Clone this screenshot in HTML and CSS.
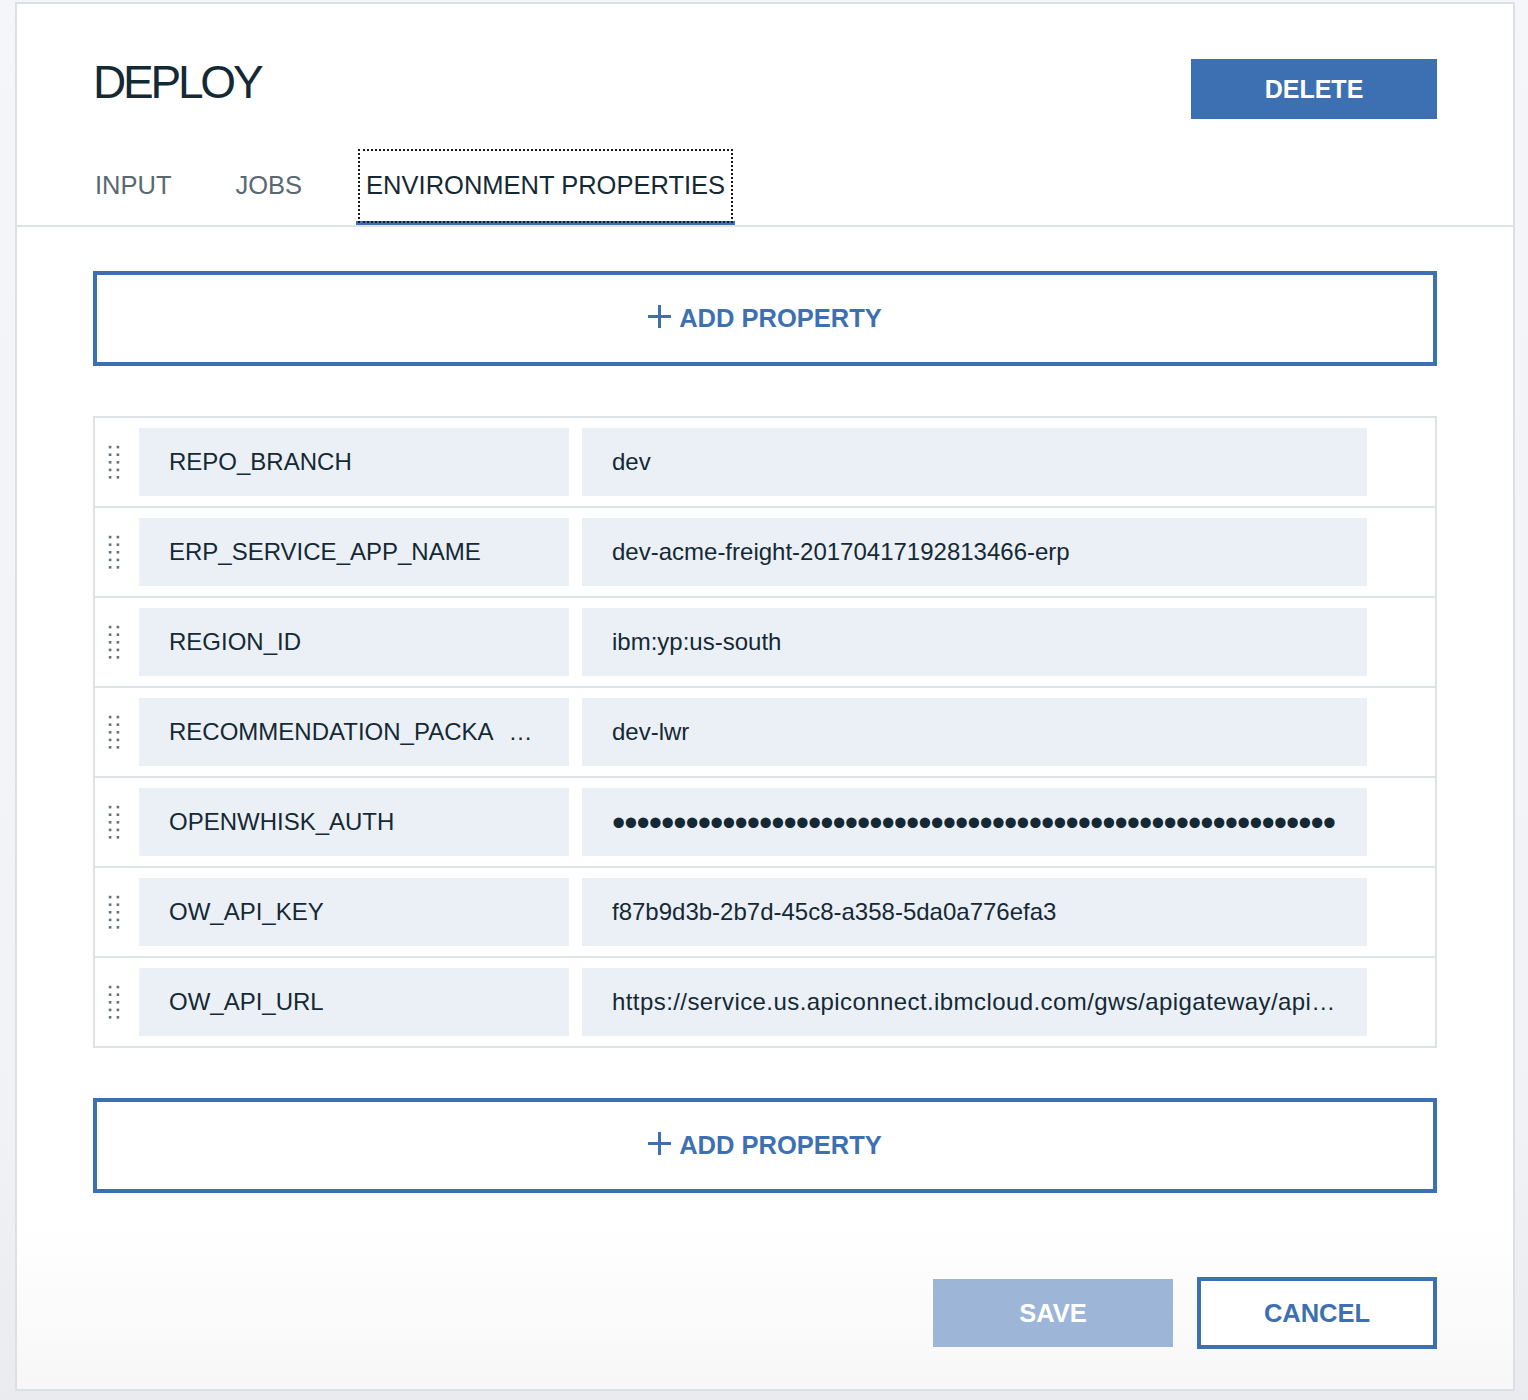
FILE: index.html
```html
<!DOCTYPE html>
<html lang="en">
<head>
<meta charset="utf-8">
<title>Deploy</title>
<link rel="stylesheet" href="styles.css">
</head>
<body>
<div class="panel">
  <div class="header">
    <div class="header-top">
      <h1 class="title">DEPLOY</h1>
      <button class="btn-delete">DELETE</button>
    </div>
    <div class="tabs">
      <div class="tab">INPUT</div>
      <div class="tab">JOBS</div>
      <div class="tab tab-active">ENVIRONMENT PROPERTIES</div>
    </div>
  </div>
  <div class="content">
    <button class="btn-add">
      <svg class="plus" width="23" height="23" viewBox="0 0 23 23"><path d="M11.5 0v23M0 11.5h23" stroke="#3d70b2" stroke-width="3" fill="none"/></svg>
      <span>ADD PROPERTY</span>
    </button>

    <div class="props">
      <div class="row">
        <svg class="handle" width="12" height="34" viewBox="0 0 12 34"><g fill="#66737d"><rect x="0.8" y="0.8" width="2.6" height="2.6"/><rect x="8.6" y="0.8" width="2.6" height="2.6"/><rect x="0.8" y="8.4" width="2.6" height="2.6"/><rect x="8.6" y="8.4" width="2.6" height="2.6"/><rect x="0.8" y="16" width="2.6" height="2.6"/><rect x="8.6" y="16" width="2.6" height="2.6"/><rect x="0.8" y="23.6" width="2.6" height="2.6"/><rect x="8.6" y="23.6" width="2.6" height="2.6"/><rect x="0.8" y="31" width="2.6" height="2.6"/><rect x="8.6" y="31" width="2.6" height="2.6"/></g></svg>
        <div class="field key">REPO_BRANCH</div>
        <div class="field value">dev</div>
      </div>
      <div class="row">
        <svg class="handle" width="12" height="34" viewBox="0 0 12 34"><g fill="#66737d"><rect x="0.8" y="0.8" width="2.6" height="2.6"/><rect x="8.6" y="0.8" width="2.6" height="2.6"/><rect x="0.8" y="8.4" width="2.6" height="2.6"/><rect x="8.6" y="8.4" width="2.6" height="2.6"/><rect x="0.8" y="16" width="2.6" height="2.6"/><rect x="8.6" y="16" width="2.6" height="2.6"/><rect x="0.8" y="23.6" width="2.6" height="2.6"/><rect x="8.6" y="23.6" width="2.6" height="2.6"/><rect x="0.8" y="31" width="2.6" height="2.6"/><rect x="8.6" y="31" width="2.6" height="2.6"/></g></svg>
        <div class="field key">ERP_SERVICE_APP_NAME</div>
        <div class="field value">dev-acme-freight-20170417192813466-erp</div>
      </div>
      <div class="row">
        <svg class="handle" width="12" height="34" viewBox="0 0 12 34"><g fill="#66737d"><rect x="0.8" y="0.8" width="2.6" height="2.6"/><rect x="8.6" y="0.8" width="2.6" height="2.6"/><rect x="0.8" y="8.4" width="2.6" height="2.6"/><rect x="8.6" y="8.4" width="2.6" height="2.6"/><rect x="0.8" y="16" width="2.6" height="2.6"/><rect x="8.6" y="16" width="2.6" height="2.6"/><rect x="0.8" y="23.6" width="2.6" height="2.6"/><rect x="8.6" y="23.6" width="2.6" height="2.6"/><rect x="0.8" y="31" width="2.6" height="2.6"/><rect x="8.6" y="31" width="2.6" height="2.6"/></g></svg>
        <div class="field key">REGION_ID</div>
        <div class="field value">ibm:yp:us-south</div>
      </div>
      <div class="row">
        <svg class="handle" width="12" height="34" viewBox="0 0 12 34"><g fill="#66737d"><rect x="0.8" y="0.8" width="2.6" height="2.6"/><rect x="8.6" y="0.8" width="2.6" height="2.6"/><rect x="0.8" y="8.4" width="2.6" height="2.6"/><rect x="8.6" y="8.4" width="2.6" height="2.6"/><rect x="0.8" y="16" width="2.6" height="2.6"/><rect x="8.6" y="16" width="2.6" height="2.6"/><rect x="0.8" y="23.6" width="2.6" height="2.6"/><rect x="8.6" y="23.6" width="2.6" height="2.6"/><rect x="0.8" y="31" width="2.6" height="2.6"/><rect x="8.6" y="31" width="2.6" height="2.6"/></g></svg>
        <div class="field key">RECOMMENDATION_PACKA<span class="ell">…</span></div>
        <div class="field value">dev-lwr</div>
      </div>
      <div class="row">
        <svg class="handle" width="12" height="34" viewBox="0 0 12 34"><g fill="#66737d"><rect x="0.8" y="0.8" width="2.6" height="2.6"/><rect x="8.6" y="0.8" width="2.6" height="2.6"/><rect x="0.8" y="8.4" width="2.6" height="2.6"/><rect x="8.6" y="8.4" width="2.6" height="2.6"/><rect x="0.8" y="16" width="2.6" height="2.6"/><rect x="8.6" y="16" width="2.6" height="2.6"/><rect x="0.8" y="23.6" width="2.6" height="2.6"/><rect x="8.6" y="23.6" width="2.6" height="2.6"/><rect x="0.8" y="31" width="2.6" height="2.6"/><rect x="8.6" y="31" width="2.6" height="2.6"/></g></svg>
        <div class="field key">OPENWHISK_AUTH</div>
        <div class="field value secret"><span class="dots">•••••••••••••••••••••••••••••••••••••••••••••••••••••••••••</span></div>
      </div>
      <div class="row">
        <svg class="handle" width="12" height="34" viewBox="0 0 12 34"><g fill="#66737d"><rect x="0.8" y="0.8" width="2.6" height="2.6"/><rect x="8.6" y="0.8" width="2.6" height="2.6"/><rect x="0.8" y="8.4" width="2.6" height="2.6"/><rect x="8.6" y="8.4" width="2.6" height="2.6"/><rect x="0.8" y="16" width="2.6" height="2.6"/><rect x="8.6" y="16" width="2.6" height="2.6"/><rect x="0.8" y="23.6" width="2.6" height="2.6"/><rect x="8.6" y="23.6" width="2.6" height="2.6"/><rect x="0.8" y="31" width="2.6" height="2.6"/><rect x="8.6" y="31" width="2.6" height="2.6"/></g></svg>
        <div class="field key">OW_API_KEY</div>
        <div class="field value">f87b9d3b-2b7d-45c8-a358-5da0a776efa3</div>
      </div>
      <div class="row">
        <svg class="handle" width="12" height="34" viewBox="0 0 12 34"><g fill="#66737d"><rect x="0.8" y="0.8" width="2.6" height="2.6"/><rect x="8.6" y="0.8" width="2.6" height="2.6"/><rect x="0.8" y="8.4" width="2.6" height="2.6"/><rect x="8.6" y="8.4" width="2.6" height="2.6"/><rect x="0.8" y="16" width="2.6" height="2.6"/><rect x="8.6" y="16" width="2.6" height="2.6"/><rect x="0.8" y="23.6" width="2.6" height="2.6"/><rect x="8.6" y="23.6" width="2.6" height="2.6"/><rect x="0.8" y="31" width="2.6" height="2.6"/><rect x="8.6" y="31" width="2.6" height="2.6"/></g></svg>
        <div class="field key">OW_API_URL</div>
        <div class="field value url">https://service.us.apiconnect.ibmcloud.com/gws/apigateway/api…</div>
      </div>
    </div>

    <button class="btn-add btn-add-2">
      <svg class="plus" width="23" height="23" viewBox="0 0 23 23"><path d="M11.5 0v23M0 11.5h23" stroke="#3d70b2" stroke-width="3" fill="none"/></svg>
      <span>ADD PROPERTY</span>
    </button>

    <div class="footer">
      <button class="btn-save">SAVE</button>
      <button class="btn-cancel">CANCEL</button>
    </div>
  </div>
</div>
</body>
</html>
```

FILE: styles.css
```css
* { box-sizing: border-box; }

html, body {
  margin: 0;
  padding: 0;
}

body {
  font-family: "Liberation Sans", Arial, sans-serif;
  background: linear-gradient(to bottom, #f5f6f9 0%, #f1f2f6 80%, #eaebef 100%);
  height: 1400px;
  overflow: hidden;
  color: #152935;
}

button {
  font-family: "Liberation Sans", Arial, sans-serif;
  cursor: pointer;
  padding: 0;
}

.panel {
  margin: 2px 0 0 15px;
  width: 1500px;
  height: 1389px;
  border: 2px solid #dcdfe4;
  background: linear-gradient(to bottom, #ffffff 0%, #ffffff 88%, #f7f7f7 100%);
}

/* Header */
.header {
  padding: 55px 76px 0;
  border-bottom: 2px solid #dfe3e6;
}

.header-top {
  display: flex;
  justify-content: space-between;
  align-items: flex-start;
  height: 60px;
}

.title {
  margin: 0;
  font-size: 46px;
  font-weight: 400;
  letter-spacing: -3.2px;
  line-height: 46px;
  color: #152935;
}

.btn-delete {
  width: 246px;
  height: 60px;
  border: 0;
  background: #3d70b2;
  color: #ffffff;
  font-size: 25px;
  font-weight: 700;
}

.tabs {
  display: flex;
  gap: 44px;
  margin: 28px 0 0 -8px;
}

.tab {
  padding: 23px 10px 21px;
  line-height: 30px;
  font-size: 25.5px;
  color: #5a6872;
  border-bottom: 4px solid transparent;
}

.tab-active {
  color: #152935;
  border-bottom-color: #3d70b2;
  outline: 2px dotted #1a1a1a;
  outline-offset: -4px;
}

/* Content */
.content {
  padding: 44px 76px 0;
}

.btn-add {
  width: 100%;
  height: 95px;
  border: 4px solid #3d70b2;
  background: transparent;
  display: flex;
  align-items: center;
  justify-content: center;
  gap: 8px;
  color: #3d70b2;
  font-size: 25.5px;
  font-weight: 700;
}

.plus {
  display: block;
  margin-top: -4px;
}

.btn-add-2 {
  margin-top: 50px;
}

.props {
  margin-top: 50px;
  border: 2px solid #dfe3e6;
}

.row {
  display: flex;
  align-items: center;
  padding: 10px 0;
  border-bottom: 2px solid #dfe3e6;
}

.row:last-child {
  border-bottom: 0;
}

.handle {
  display: block;
  flex: none;
  margin: 0 19px 0 13px;
}

.field {
  height: 68px;
  display: flex;
  align-items: center;
  padding: 0 30px;
  background: #ebf0f7;
  font-size: 24px;
  color: #152935;
  white-space: nowrap;
  overflow: hidden;
}

.key {
  width: 430px;
  flex: none;
}

.value {
  width: 785px;
  flex: none;
  margin-left: 13px;
}

.url {
  letter-spacing: 0.42px;
}

.ell {
  margin-left: 15px;
}

.dots {
  font-size: 38px;
  letter-spacing: -1.05px;
  line-height: 1;
  color: #152935;
  position: relative;
  top: 1px;
}

/* Footer */
.footer {
  display: flex;
  justify-content: flex-end;
  align-items: center;
  gap: 24px;
  margin-top: 84px;
}

.btn-save {
  width: 240px;
  height: 68px;
  border: 0;
  background: #9db6d7;
  color: #ffffff;
  font-size: 25.5px;
  font-weight: 700;
}

.btn-cancel {
  width: 240px;
  height: 72px;
  border: 4px solid #3d70b2;
  background: #ffffff;
  color: #3d70b2;
  font-size: 25.5px;
  font-weight: 700;
}
```
